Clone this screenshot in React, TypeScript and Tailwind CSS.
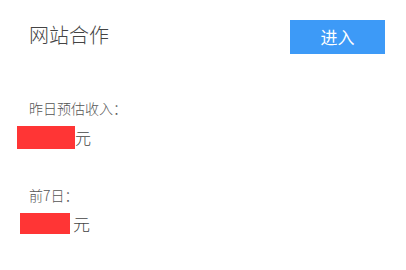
const FONT = "font-['Microsoft_YaHei','Noto_Sans_CJK_SC',sans-serif]";

export default function App() {
  return (
    <div className={`w-[406px] h-[270px] bg-white pt-[20px] pl-[29px] pr-[21px] ${FONT}`}>
      {/* Header */}
      <div className="flex items-start justify-between">
        <div className="text-[20px] leading-[30px] font-light text-[#444]">网站合作</div>
        <button className="w-[95px] h-[34px] bg-[#3d9af7] text-white text-[17px] leading-[34px]">
          进入
        </button>
      </div>

      {/* Yesterday */}
      <div className="mt-[45px] text-[14px] leading-[18px] font-light text-[#555]">昨日预估收入：</div>
      <div className="mt-[9px] -ml-[12px] flex items-center">
        <span className="w-[58px] h-[23px] bg-[#ff3535]" />
        <span className="text-[16px] leading-[23px] font-light text-[#444]">元</span>
      </div>

      {/* Last 7 days */}
      <div className="mt-[37px] text-[14px] leading-[18px] font-light text-[#555]">前7日：</div>
      <div className="mt-[9px] -ml-[9px] flex items-center gap-[3px]">
        <span className="w-[50px] h-[21px] bg-[#ff3535]" />
        <span className="text-[17px] leading-[21px] font-light text-[#444]">元</span>
      </div>
    </div>
  );
}
